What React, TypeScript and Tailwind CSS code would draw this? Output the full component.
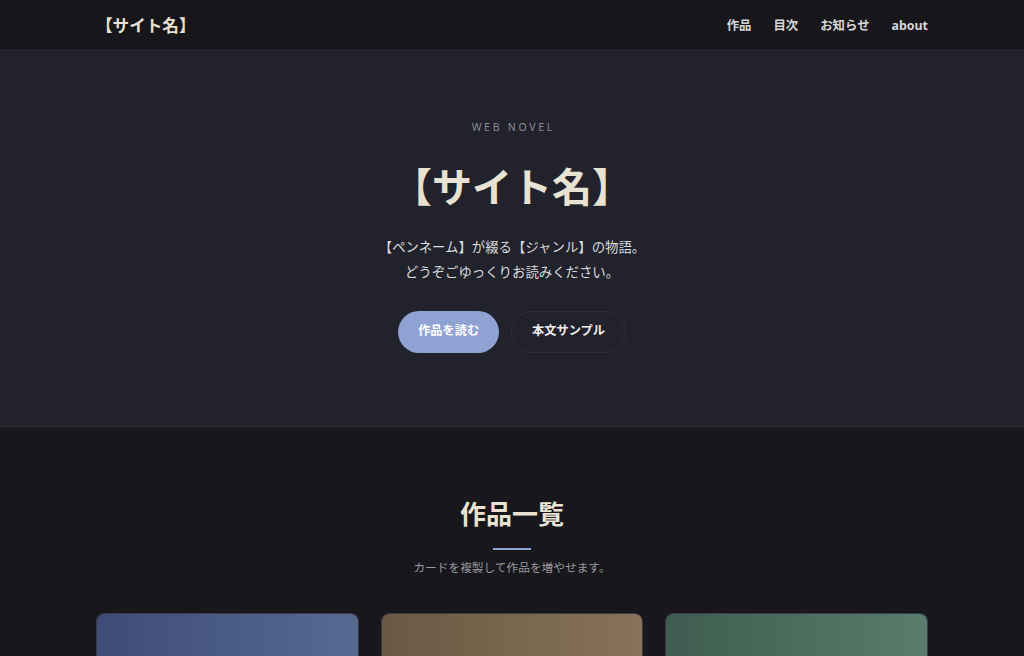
import React from "react";

const navItems = ["作品", "目次", "お知らせ", "about"];

const works = [
	{ id: 1, tone: "bg-gradient-to-r from-[#3d4c76] to-[#576a92]" },
	{ id: 2, tone: "bg-gradient-to-r from-[#695943] to-[#877358]" },
	{ id: 3, tone: "bg-gradient-to-r from-[#3e5d50] to-[#5a7c6c]" },
];

const font = { fontFamily: '"Noto Sans", "Noto Sans CJK JP", sans-serif' };

export default function App() {
	return (
		<div className="min-h-screen bg-[#17171c] text-[#e6e1d6]" style={font}>
			<header className="h-[50px] bg-[#16161b] border-b border-[#24252f]">
				<div className="mx-auto flex h-full max-w-[832px] items-center justify-between pt-[4px]">
					<a className="text-[16.6px] font-bold leading-none text-[#e6e1d6]">【サイト名】</a>
					<nav className="flex items-center gap-[22px] text-[12.4px] font-bold text-[#d6d6d6]">
						{navItems.map((item) => (
							<a key={item}>{item}</a>
						))}
					</nav>
				</div>
			</header>

			<section className="bg-[#21222c] border-b border-[#2c2d38] pt-[72px] pb-[73px] text-center">
				<p className="text-[10.5px] tracking-[0.26em] leading-none text-[#8c8c92] pl-[0.26em]">WEB NOVEL</p>
				<h1 className="mt-[26px] text-[40px] font-bold leading-[56px] text-[#e8e2d3]">【サイト名】</h1>
				<p className="mt-[20px] text-[13.4px] leading-[25px] text-[#dcdcdc]">
					【ペンネーム】が綴る【ジャンル】の物語。
					<br />
					どうぞごゆっくりお読みください。
				</p>
				<div className="mt-[26px] flex justify-center gap-[12px]">
					<a className="flex h-[42px] items-center rounded-full bg-[#8fa2d4] px-[20px] text-[12.2px] font-bold text-white">
						作品を読む
					</a>
					<a className="flex h-[42px] items-center rounded-full border border-[#2f303b] px-[20px] text-[12.2px] font-bold text-[#eeeeee]">
						本文サンプル
					</a>
				</div>
			</section>

			<section className="pt-[68px] pb-16">
				<div className="mx-auto max-w-[832px]">
					<div className="text-center">
						<h2 className="text-[26px] font-bold leading-[38px] text-[#e8e2d3]">作品一覧</h2>
						<div className="mx-auto mt-[15px] h-[2px] w-[38px] bg-[#8fa2d4]" />
						<p className="mt-[8px] text-[11.7px] leading-[18px] text-[#9a9a9e]">カードを複製して作品を増やせます。</p>
					</div>
					<div className="mt-[37px] grid grid-cols-3 gap-[22px]">
						{works.map((w) => (
							<article key={w.id} className="overflow-hidden rounded-lg border border-[#3a3b46] bg-[#1e1f27]">
								<div className={`h-[220px] ${w.tone}`} />
							</article>
						))}
					</div>
				</div>
			</section>
		</div>
	);
}
